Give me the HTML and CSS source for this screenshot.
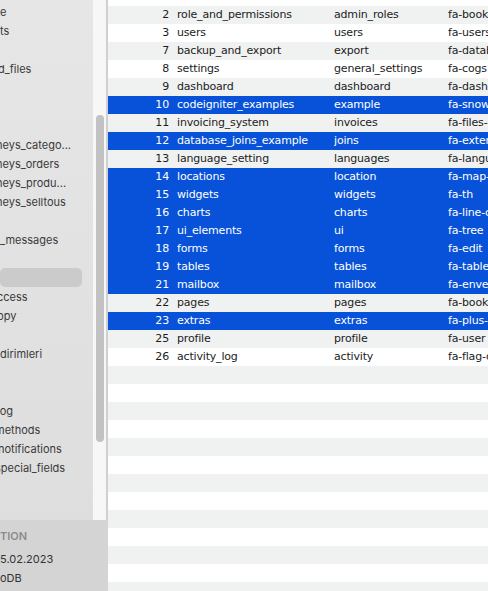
FILE: index.html
```html
<!DOCTYPE html>
<html>
<head>
<meta charset="utf-8">
<link rel="stylesheet" href="styles.css">
</head>
<body>
<div class="window">
  <aside class="sidebar">
    <div class="side-top">
      <ul class="side-list">
        <li>e</li>
        <li>ts</li>
        <li></li>
        <li class="cut2">d_files</li>
        <li></li>
        <li></li>
        <li></li>
        <li class="cut4">neys_catego...</li>
        <li class="cut4">neys_orders</li>
        <li class="cut4">neys_produ...</li>
        <li class="cut4">neys_selltous</li>
        <li></li>
        <li>_messages</li>
        <li></li>
        <li class="selected"></li>
        <li class="cut3">ccess</li>
        <li class="cut3">ppy</li>
        <li></li>
        <li>dirimleri</li>
        <li></li>
        <li></li>
        <li class="cut3">log</li>
        <li class="cut5">methods</li>
        <li class="cut2">notifications</li>
        <li class="cut5">special_fields</li>
        <li></li>
        <li></li>
      </ul>
      <div class="track"><div class="thumb"></div></div>
      <div class="divider"></div>
    </div>
    <div class="side-footer">
      <div class="foot-head">TION</div>
      <div class="foot-item">5.02.2023</div>
      <div class="foot-item">oDB</div>
    </div>
  </aside>
  <main class="table">
    <div class="row"><span class="id">1</span><span class="c1">admin</span><span class="c2">admin</span><span class="c3">fa-user</span></div>
    <div class="row"><span class="id">2</span><span class="c1">role_and_permissions</span><span class="c2">admin_roles</span><span class="c3">fa-book</span></div>
    <div class="row"><span class="id">3</span><span class="c1">users</span><span class="c2">users</span><span class="c3">fa-users</span></div>
    <div class="row"><span class="id">7</span><span class="c1">backup_and_export</span><span class="c2">export</span><span class="c3">fa-database</span></div>
    <div class="row"><span class="id">8</span><span class="c1">settings</span><span class="c2">general_settings</span><span class="c3">fa-cogs</span></div>
    <div class="row"><span class="id">9</span><span class="c1">dashboard</span><span class="c2">dashboard</span><span class="c3">fa-dashboard</span></div>
    <div class="row sel"><span class="id">10</span><span class="c1">codeigniter_examples</span><span class="c2">example</span><span class="c3">fa-snowflake-o</span></div>
    <div class="row"><span class="id">11</span><span class="c1">invoicing_system</span><span class="c2">invoices</span><span class="c3">fa-files-o</span></div>
    <div class="row sel"><span class="id">12</span><span class="c1">database_joins_example</span><span class="c2">joins</span><span class="c3">fa-external-link</span></div>
    <div class="row"><span class="id">13</span><span class="c1">language_setting</span><span class="c2">languages</span><span class="c3">fa-language</span></div>
    <div class="row sel"><span class="id">14</span><span class="c1">locations</span><span class="c2">location</span><span class="c3">fa-map-marker</span></div>
    <div class="row sel"><span class="id">15</span><span class="c1">widgets</span><span class="c2">widgets</span><span class="c3">fa-th</span></div>
    <div class="row sel"><span class="id">16</span><span class="c1">charts</span><span class="c2">charts</span><span class="c3">fa-line-chart</span></div>
    <div class="row sel"><span class="id">17</span><span class="c1">ui_elements</span><span class="c2">ui</span><span class="c3">fa-tree</span></div>
    <div class="row sel"><span class="id">18</span><span class="c1">forms</span><span class="c2">forms</span><span class="c3">fa-edit</span></div>
    <div class="row sel"><span class="id">19</span><span class="c1">tables</span><span class="c2">tables</span><span class="c3">fa-table</span></div>
    <div class="row sel"><span class="id">21</span><span class="c1">mailbox</span><span class="c2">mailbox</span><span class="c3">fa-envelope</span></div>
    <div class="row"><span class="id">22</span><span class="c1">pages</span><span class="c2">pages</span><span class="c3">fa-book</span></div>
    <div class="row sel"><span class="id">23</span><span class="c1">extras</span><span class="c2">extras</span><span class="c3">fa-plus-square</span></div>
    <div class="row"><span class="id">25</span><span class="c1">profile</span><span class="c2">profile</span><span class="c3">fa-user</span></div>
    <div class="row"><span class="id">26</span><span class="c1">activity_log</span><span class="c2">activity</span><span class="c3">fa-flag-o</span></div>
    <div class="row"></div><div class="row"></div><div class="row"></div><div class="row"></div>
    <div class="row"></div><div class="row"></div><div class="row"></div><div class="row"></div>
    <div class="row"></div><div class="row"></div><div class="row"></div><div class="row"></div>
    <div class="row"></div>
  </main>
</div>
</body>
</html>
```
FILE: styles.css
```css
html, body {
  margin: 0;
  padding: 0;
  background: #ffffff;
}
.window {
  display: flex;
  width: 488px;
  height: 591px;
  overflow: hidden;
}
.sidebar {
  width: 108px;
  flex: none;
  display: flex;
  flex-direction: column;
}
.side-top {
  height: 520px;
  display: flex;
}
.side-list {
  list-style: none;
  margin: 0;
  padding: 2px 0 0 0;
  width: 93px;
  flex: none;
  overflow: hidden;
  background: linear-gradient(#e6e6e6, #dedede);
  font-family: Inter, "Noto Sans", sans-serif;
  font-size: 11px;
  color: #3a3a3a;
}
.side-list li {
  height: 19px;
  line-height: 21px;
  white-space: nowrap;
}
.side-list li.selected {
  background: #cbcbcb;
  border-radius: 5px;
  width: 82px;
}
.cut2 { text-indent: -2px; }
.cut3 { text-indent: -3px; }
.cut4 { text-indent: -4px; }
.cut5 { text-indent: -5px; }
.track {
  width: 13px;
  flex: none;
  background: #f7f7f7;
  position: relative;
}
.thumb {
  position: absolute;
  left: 3px;
  top: 115px;
  width: 8px;
  height: 327px;
  border-radius: 4px;
  background: #c2c2c2;
}
.divider {
  width: 2px;
  flex: none;
  background: #d0d0d0;
}
.side-footer {
  flex: 1;
  background: #d4d4d4;
  font-family: Inter, "Noto Sans", sans-serif;
  font-size: 11px;
  color: #333333;
  padding-top: 9px;
}
.foot-head {
  height: 21px;
  line-height: 14px;
  color: #8c8c8c;
  font-weight: 600;
}
.foot-item {
  height: 19px;
  line-height: 19px;
}
.table {
  flex: 1;
  margin-top: -12px;
  font-family: "DejaVu Sans", Verdana, sans-serif;
  font-size: 11px;
  letter-spacing: -0.18px;
  color: #1c1c1c;
  overflow: hidden;
}
.row {
  height: 18px;
  line-height: 18px;
  display: grid;
  grid-template-columns: 61px 165px 114px 200px;
  white-space: nowrap;
  background: #ffffff;
}
.row:nth-child(even) {
  background: #f0f1f1;
}
.row.sel {
  background: #0852d9;
  color: #ffffff;
}
.row span {
  overflow: hidden;
}
.id {
  text-align: right;
}
.c1 {
  padding-left: 8px;
}
```
